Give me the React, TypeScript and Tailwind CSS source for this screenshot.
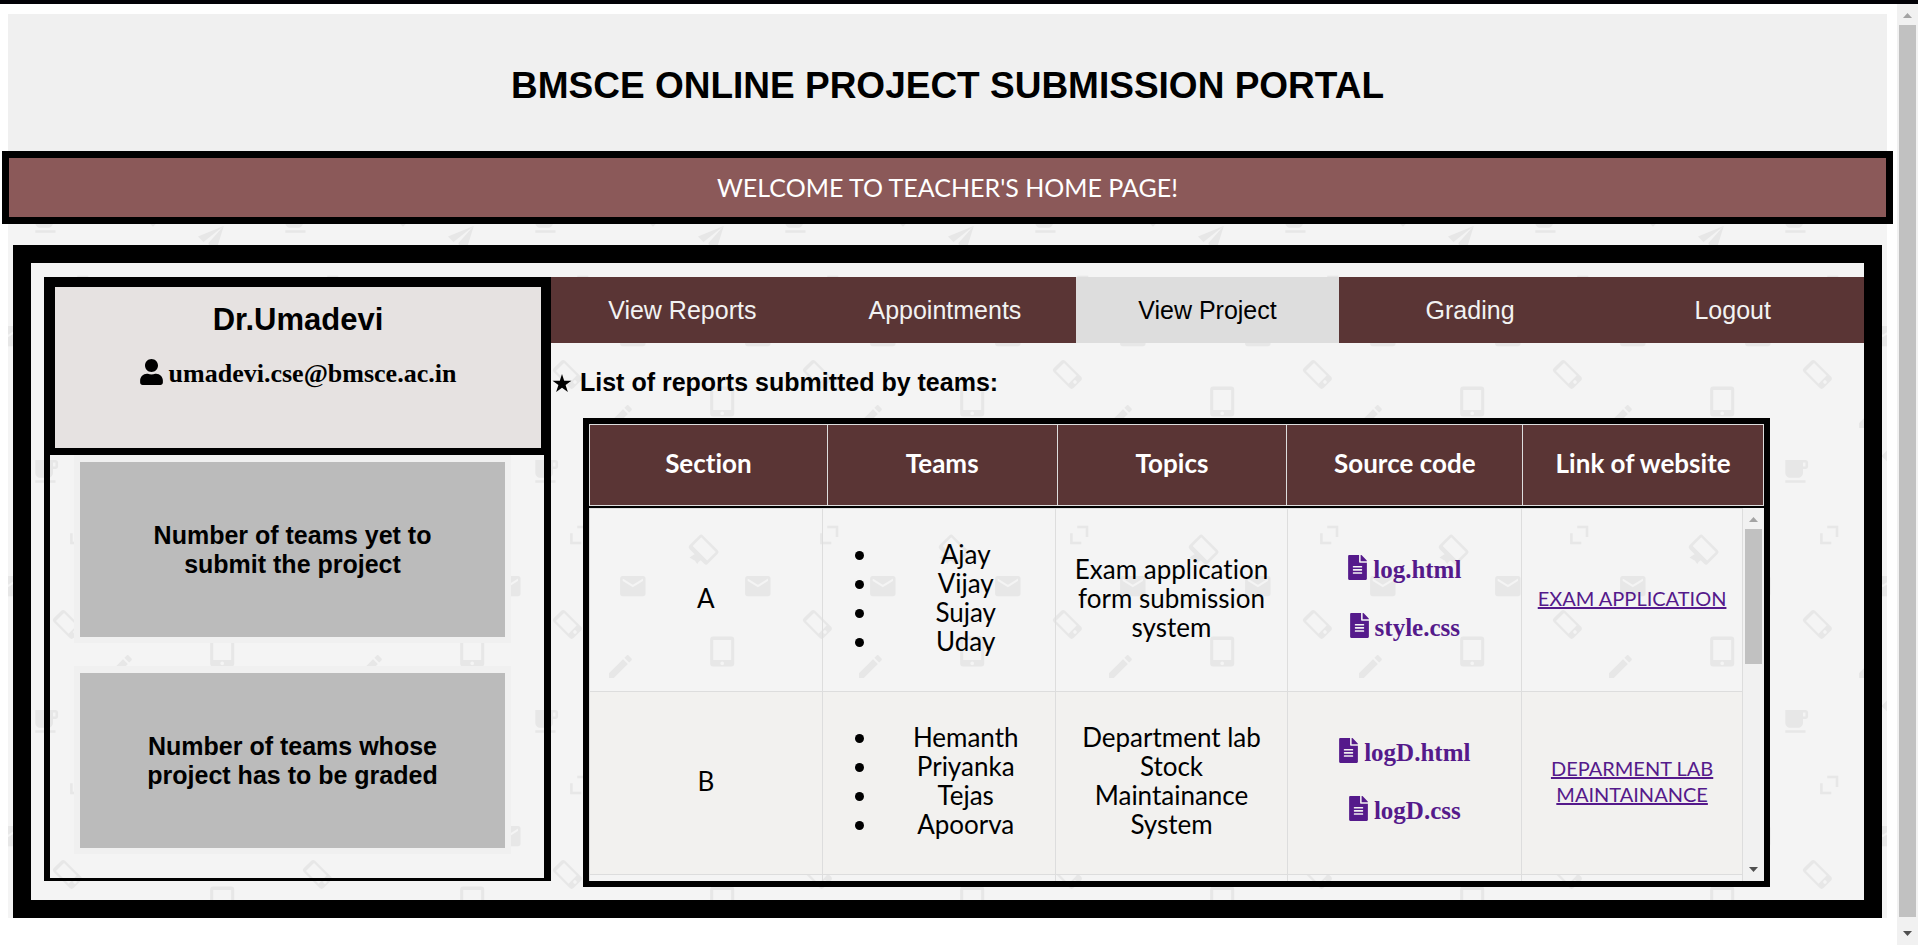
import React from "react";
import { FaFileAlt, FaUser } from "react-icons/fa";

const tabs = ["View Reports", "Appointments", "View Project", "Grading", "Logout"];
const columns = ["Section", "Teams", "Topics", "Source code", "Link of website"];

const rows = [
  {
    section: "A",
    teams: ["Ajay", "Vijay", "Sujay", "Uday"],
    topic: "Exam application form submission system",
    files: ["log.html", "style.css"],
    link: "EXAM APPLICATION",
  },
  {
    section: "B",
    teams: ["Hemanth", "Priyanka", "Tejas", "Apoorva"],
    topic: "Department lab Stock Maintainance System",
    files: ["logD.html", "logD.css"],
    link: "DEPARMENT LAB MAINTAINANCE",
  },
];

const wells = [
  "Number of teams yet to submit the project",
  "Number of teams whose project has to be graded",
];

const MAIL =
  "M20 4H4c-1.1 0-2 .9-2 2v12c0 1.1.9 2 2 2h16c1.1 0 2-.9 2-2V6c0-1.1-.9-2-2-2zm0 4l-8 5-8-5V6l8 5 8-5v2z";

function Backdrop() {
  return (
    <svg className="absolute inset-0 h-full w-full" aria-hidden="true">
      <defs>
        <pattern id="doodles" width="250" height="250" patternUnits="userSpaceOnUse">
          <rect width="250" height="250" fill="#f4f4f4" />
          <g fill="#e7e7e7" fillRule="evenodd">
            <path d={MAIL} transform="translate(109.6 56.8) scale(1.27)" />
            <path d={MAIL} transform="translate(234.6 56.8) scale(1.27)" />
            <path d={MAIL} transform="translate(-15.4 56.8) scale(1.27)" />
            <path
              d="M20 3H4v10c0 2.21 1.79 4 4 4h6c2.21 0 4-1.79 4-4v-3h2c1.11 0 2-.9 2-2V5c0-1.11-.89-2-2-2zm0 5h-2V5h2v3zM4 19h16v2H4z"
              transform="translate(22.3 192.3) scale(1.26)"
            />
            <path
              d="M3 17.25V21h3.75L17.81 9.94l-3.75-3.75L3 17.25zM20.71 7.04c.39-.39.39-1.02 0-1.41l-2.34-2.34c-.39-.39-1.02-.39-1.41 0l-1.83 1.83 3.75 3.75 1.83-1.83z"
              transform="translate(97.2 137.3) scale(1.27)"
            />
            <path
              d="M3 0H21Q24 0 24 3V27Q24 30 21 30H3Q0 30 0 27V3Q0 0 3 0ZM3 3.7V23.5H21V3.7ZM12 25A1.9 1.9 0 1 0 12 28.8A1.9 1.9 0 1 0 12 25Z"
              transform="translate(202.2 122.4)"
            />
            <path
              d="M-5 -14H5Q8 -14 8 -11V11Q8 14 5 14H-5Q-8 14 -8 11V-11Q-8 -14 -5 -14ZM-5.7 -10.5V7.4H5.7V-10.5ZM0 8.9A1.8 1.8 0 1 0 0 12.5A1.8 1.8 0 1 0 0 8.9Z"
              transform="translate(59.4 110.4) rotate(-45)"
            />
            <path
              d="M-10.5 -9.5H10.5Q13 -9.5 13 -7V7Q13 9.5 10.5 9.5H-10.5Q-13 9.5 -13 7V-7Q-13 -9.5 -10.5 -9.5ZM-10.3 -7V5.2H10.3V-7Z"
              transform="translate(195.6 35.6) rotate(45)"
            />
            <path d="M181.5 43.5L187 40L193 46L190.5 48L189.3 50L187 46.8Z" />
            <path d="M190 222.6L215.7 212L195.4 228Z" />
            <path d="M215.7 212L200.5 229L202 236L205 232L209 234Z" />
            <path d="M123.5 192L137 178.5L158.5 199L145 212.8Z" />
          </g>
          <path d="M69.3 13H79V23M63.4 19.3V29H73.3" fill="none" stroke="#e7e7e7" strokeWidth="2.5" />
        </pattern>
      </defs>
      <rect width="100%" height="100%" fill="url(#doodles)" />
    </svg>
  );
}

function Arrow({ down = false, dim = false }: { down?: boolean; dim?: boolean }) {
  return (
    <svg width="9" height="5" viewBox="0 0 9 5" className={dim ? "fill-[#a3a3a3]" : "fill-[#505050]"}>
      <path d={down ? "M0 0H9L4.500 5Z" : "M0 5H9L4.500 0Z"} />
    </svg>
  );
}

export default function App() {
  return (
    <div className="flex min-h-screen flex-col bg-white font-['Liberation_Sans',Arial,sans-serif] text-black">
      <div className="h-1 bg-[#020106]" />
      <div className="flex grow">
        <div className="min-w-0 grow pt-2.5 pr-2.5 pb-[27px] pl-2">
          <div className="relative">
            <Backdrop />
            <div className="relative">
              <header className="flex h-[137px] items-center justify-center bg-[#f0f0f0] pt-1.5">
                <h1 className="text-[37px] font-bold">BMSCE ONLINE PROJECT SUBMISSION PORTAL</h1>
              </header>
              <div className="-mx-1.5 flex h-[73px] items-center justify-center border-[7px] border-black bg-[#8b5959] font-['Comic_Sans_MS',Lato,sans-serif] text-[25px] text-white">
                WELCOME TO TEACHER'S HOME PAGE!
              </div>

              <main className="mt-[21px] mr-[5px] ml-[5px] flex items-start border-[18px] border-black pt-3.5 pb-[13px] pl-[13px]">
                <aside className="h-[604px] w-[507px] shrink-0 border-r-[7px] border-b-[3px] border-l-[6px] border-black">
                  <div className="h-[178px] border-t-[10px] border-r-[3px] border-b-[7px] border-l-[5px] border-black bg-[#e6e2e1] pt-[15px] text-center">
                    <h2 className="text-[31px] leading-9 font-bold">Dr.Umadevi</h2>
                    <p className="mt-[18px] flex items-center justify-center gap-1.5 font-['Liberation_Serif','Times_New_Roman',serif] text-[26px] leading-9 font-bold">
                      <FaUser className="mb-1 h-[26px] w-[23px]" />
                      umadevi.cse@bmsce.ac.in
                    </p>
                  </div>
                  <div className="flex flex-col gap-[23px] pr-[33px] pl-6">
                    {wells.map((text) => (
                      <section
                        key={text}
                        className="flex h-[188px] items-center justify-center border-[6px] border-t-[7px] border-[#f0f0f0] bg-[#bbb] px-12 text-center text-[25px] leading-[29px] font-bold"
                      >
                        {text}
                      </section>
                    ))}
                  </div>
                </aside>

                <div className="min-w-0 grow">
                  <nav className="flex h-[66px] bg-[#5a3535] text-[25px]">
                    {tabs.map((tab) => (
                      <a
                        key={tab}
                        href="#"
                        className={
                          tab === "View Project"
                            ? "flex flex-1 items-center justify-center bg-[#ddd] pt-px text-black"
                            : "flex flex-1 items-center justify-center pt-px text-[#f2f2f2]"
                        }
                      >
                        {tab}
                      </a>
                    ))}
                  </nav>
                  <h3 className="mt-6 flex items-center gap-2 text-[25px] leading-[30px] font-bold">
                    <svg className="mt-0.5 ml-px h-[18px] w-5" viewBox="0 0 20 19" aria-hidden="true">
                      <path d="M10 0L12.300 7.200H20L13.800 11.600L16.200 19L10 14.500L3.800 19L6.200 11.600L0 7.200H7.700Z" />
                    </svg>
                    List of reports submitted by teams:
                  </h3>

                  <div className="relative mt-[21px] mr-[94px] ml-8 border-[6px] border-black font-['Trebuchet_MS',Lato,sans-serif] text-[26px] leading-[29px] [font-variant-ligatures:none]">
                    <table className="block">
                      <thead className="block border-b-2 border-black text-white">
                        <tr className="grid grid-cols-[238fr_230fr_230fr_236fr_241fr] border-t border-r border-b border-[#ddd] bg-[#5a3535]">
                          {columns.map((column) => (
                            <th
                              key={column}
                              scope="col"
                              className="flex h-20 items-center justify-center border-l border-[#ddd] pb-1 font-bold"
                            >
                              {column}
                            </th>
                          ))}
                        </tr>
                      </thead>
                      <tbody className="block h-[373px] overflow-hidden border-t border-[#ddd] pr-[21px]">
                        {rows.map((row) => (
                          <tr
                            key={row.section}
                            className="grid h-[183px] grid-cols-[233fr_233fr_233fr_234fr_221fr] border-r border-b border-[#ddd] text-center even:bg-[#f2f1ef]"
                          >
                            <td className="flex items-center justify-center border-l border-[#ddd] pb-1">
                              {row.section}
                            </td>
                            <td className="flex items-center border-l border-[#ddd] pr-0.5 pb-1 pl-14">
                              <ul className="w-full list-disc">
                                {row.teams.map((name) => (
                                  <li key={name}>{name}</li>
                                ))}
                              </ul>
                            </td>
                            <td className="flex items-center justify-center border-l border-[#ddd] px-4 pb-1">
                              {row.topic}
                            </td>
                            <td className="flex flex-col items-center justify-center gap-[29px] border-l border-[#ddd] pb-1 font-['Liberation_Serif','Times_New_Roman',serif] text-[25px] font-bold text-[#551a8b]">
                              {row.files.map((file) => (
                                <a key={file} href="#" className="flex items-center gap-1.5">
                                  <FaFileAlt className="mb-1 h-[25px] w-[19px]" />
                                  {file}
                                </a>
                              ))}
                            </td>
                            <td className="flex items-center justify-center border-l border-[#ddd] px-2 pb-1">
                              <a href="#" className="text-[20px] leading-[26px] text-[#551a8b] underline">
                                {row.link}
                              </a>
                            </td>
                          </tr>
                        ))}
                        <tr className="grid h-[183px] grid-cols-[233fr_233fr_233fr_234fr_221fr] border-r border-[#ddd]">
                          {columns.map((column) => (
                            <td key={column} className="border-l border-[#ddd]" />
                          ))}
                        </tr>
                      </tbody>
                    </table>
                    <div
                      className="absolute right-0 bottom-0 flex h-[373px] w-[21px] flex-col items-center bg-[#f1f1f1] py-[9px]"
                      aria-hidden="true"
                    >
                      <Arrow dim />
                      <div className="mt-[7px] mb-auto h-[135px] w-[17px] bg-[#c1c1c1]" />
                      <Arrow down />
                    </div>
                  </div>
                </div>
              </main>
            </div>
          </div>
        </div>
        <div className="flex w-[21px] shrink-0 flex-col items-center bg-[#f1f1f1] py-[9px]" aria-hidden="true">
          <Arrow dim />
          <div className="mt-[7px] mb-3.5 w-[17px] grow bg-[#c1c1c1]" />
          <Arrow down />
        </div>
      </div>
    </div>
  );
}
